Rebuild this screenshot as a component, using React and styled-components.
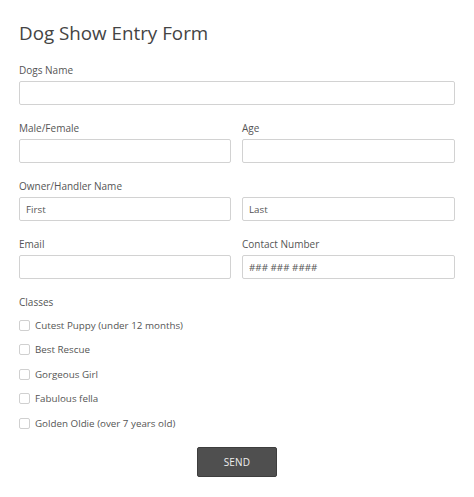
import React from 'react';
import styled, { createGlobalStyle } from 'styled-components';

const GlobalStyle = createGlobalStyle`
    body {
        margin: 0;
        background: #fff;
        font-family: "Open Sans", "Liberation Sans", sans-serif;
    }
`;

const classes = [
    'Cutest Puppy (under 12 months)',
    'Best Rescue',
    'Gorgeous Girl',
    'Fabulous fella',
    'Golden Oldie (over 7 years old)',
];

const App = () => {
    return (
        <StyledForm>
            <GlobalStyle />
            <Title>Dog Show Entry Form</Title>
            <Field>
                <Label>Dogs Name</Label>
                <Input />
            </Field>
            <Row>
                <Field>
                    <Label>Male/Female</Label>
                    <Input />
                </Field>
                <Field>
                    <Label>Age</Label>
                    <Input />
                </Field>
            </Row>
            <Field>
                <Label>Owner/Handler Name</Label>
                <Row>
                    <Input placeholder="First" />
                    <Input placeholder="Last" />
                </Row>
            </Field>
            <Row>
                <Field>
                    <Label>Email</Label>
                    <Input />
                </Field>
                <Field>
                    <Label>Contact Number</Label>
                    <Input placeholder="### ### ####" />
                </Field>
            </Row>
            <Field>
                <Label>Classes</Label>
                <Checklist>
                    {classes.map((c) => (
                        <CheckRow key={c}>
                            <Box type="checkbox" />
                            {c}
                        </CheckRow>
                    ))}
                </Checklist>
            </Field>
            <Footer>
                <SendButton>SEND</SendButton>
            </Footer>
        </StyledForm>
    );
};

const StyledForm = styled.form`
    width: 436px;
    padding: 20px 0 0 19px;
    display: flex;
    flex-direction: column;
    gap: 16px;
`;

const Title = styled.h1`
    margin: 0 0 1px;
    font-size: 18.8px;
    line-height: 26px;
    font-weight: 400;
    color: #444;
`;

const Field = styled.div`
    display: flex;
    flex-direction: column;
    gap: 4px;
    min-width: 0;
`;

const Row = styled.div`
    display: grid;
    grid-template-columns: 212px 213px;
    column-gap: 11px;
`;

const Label = styled.label`
    font-size: 10px;
    line-height: 14px;
    color: #555;
`;

const Input = styled.input`
    box-sizing: border-box;
    width: 100%;
    height: 24px;
    margin: 0;
    padding: 0 6px;
    border: 1px solid #d2d2d2;
    border-radius: 2px;
    font-family: inherit;
    font-size: 9.8px;
    color: #444;
    background: #fff;
    &::placeholder {
        color: #555;
    }
`;

const Checklist = styled.div`
    display: flex;
    flex-direction: column;
    gap: 10.5px;
    margin-top: 5px;
`;

const CheckRow = styled.label`
    display: flex;
    align-items: center;
    gap: 5px;
    height: 14px;
    font-size: 9.8px;
    color: #555;
`;

const Box = styled.input`
    appearance: none;
    margin: 0;
    width: 11px;
    height: 11px;
    border: 1px solid #d0d0d0;
    border-radius: 2px;
    background: #fff;
`;

const Footer = styled.div`
    display: flex;
    justify-content: center;
    margin-top: 1px;
`;

const SendButton = styled.button`
    width: 80px;
    height: 30px;
    border: 1px solid #3e3e3e;
    border-radius: 2px;
    background: #4f4f4f;
    color: #eee;
    font-family: inherit;
    font-size: 10px;
    letter-spacing: 0.2px;
`;

export default App;
